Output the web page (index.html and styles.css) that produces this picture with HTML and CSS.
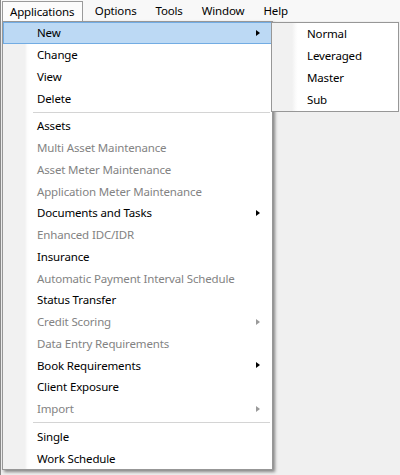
FILE: index.html
```html
<!DOCTYPE html>
<html>
<head>
<meta charset="utf-8">
<link rel="stylesheet" href="styles.css">
</head>
<body>
<div class="screen">
  <div class="menubar">
    <div class="top-item active">Applications</div>
    <div class="top-item">Options</div>
    <div class="top-item">Tools</div>
    <div class="top-item">Window</div>
    <div class="top-item">Help</div>
  </div>
  <div class="dropdown">
    <div class="item hover"><span>New</span><i class="arrow"></i></div>
    <div class="item"><span>Change</span></div>
    <div class="item"><span>View</span></div>
    <div class="item"><span>Delete</span></div>
    <div class="sep"></div>
    <div class="item"><span>Assets</span></div>
    <div class="item off"><span>Multi Asset Maintenance</span></div>
    <div class="item off"><span>Asset Meter Maintenance</span></div>
    <div class="item off"><span>Application Meter Maintenance</span></div>
    <div class="item"><span>Documents and Tasks</span><i class="arrow"></i></div>
    <div class="item off"><span>Enhanced IDC/IDR</span></div>
    <div class="item"><span>Insurance</span></div>
    <div class="item off"><span>Automatic Payment Interval Schedule</span></div>
    <div class="item"><span>Status Transfer</span></div>
    <div class="item off"><span>Credit Scoring</span><i class="arrow"></i></div>
    <div class="item off"><span>Data Entry Requirements</span></div>
    <div class="item"><span>Book Requirements</span><i class="arrow"></i></div>
    <div class="item"><span>Client Exposure</span></div>
    <div class="item off"><span>Import</span><i class="arrow"></i></div>
    <div class="sep"></div>
    <div class="item"><span>Single</span></div>
    <div class="item"><span>Work Schedule</span></div>
  </div>
  <div class="submenu">
    <div class="sub-item">Normal</div>
    <div class="sub-item">Leveraged</div>
    <div class="sub-item">Master</div>
    <div class="sub-item">Sub</div>
  </div>
</div>
</body>
</html>
```
FILE: styles.css
```css
html, body {
  margin: 0;
  padding: 0;
}
body {
  width: 400px;
  height: 475px;
  overflow: hidden;
  background: #f0f0f0;
  font-family: "Noto Sans", "Open Sans", sans-serif;
  font-size: 11.5px;
  letter-spacing: -0.15px;
  color: #000;
}
.screen {
  position: relative;
  width: 400px;
  height: 475px;
  background: #f0f0f0;
  border-left: 1px solid #8a8a8a;
  box-sizing: border-box;
}
.menubar {
  display: flex;
  height: 21px;
  padding-left: 1px;
  background: #f8f8f8;
  box-sizing: border-box;
}
.top-item {
  height: 21px;
  line-height: 21px;
  padding: 0 9.5px 0 9.5px;
  box-sizing: border-box;
}
.top-item.active {
  background: #fcfcfc;
  border: 1px solid #9a9a9a;
  border-bottom: none;
  line-height: 19px;
  padding: 0 8px 0 7px;
  margin-top: 1px;
  height: 20px;
  position: relative;
  z-index: 3;
  margin-right: 2px;
}
.dropdown {
  position: absolute;
  left: 1px;
  top: 21px;
  width: 271px;
  height: 449px;
  box-sizing: border-box;
  border: 1px solid #979797;
  background: linear-gradient(to right, #f1f1f1 0, #f1f1f1 22px, #fcfcfc 24px, #fff 26px);
  box-shadow: 2px 2px 3px rgba(0, 0, 0, 0.45);
  z-index: 2;
}
.item {
  height: 21.75px;
  display: flex;
  align-items: center;
  padding-left: 34px;
  padding-right: 12px;
  box-sizing: border-box;
  position: relative;
}
.item span {
  flex: 1;
  white-space: nowrap;
}
.item.off {
  color: #838383;
}
.item.hover {
  background: #bcd9f4;
  border: 1px solid #72ace3;
  padding-left: 33px;
  padding-right: 11px;
}
.arrow {
  width: 0;
  height: 0;
  border-top: 3.5px solid transparent;
  border-bottom: 3.5px solid transparent;
  border-left: 4px solid #000;
}
.item.off .arrow {
  border-left-color: #9a9a9a;
}
.sep {
  height: 6px;
  display: flex;
  align-items: center;
  padding-left: 30px;
  padding-right: 2px;
}
.sep::before {
  content: "";
  flex: 1;
  height: 1px;
  background: #d4d4d4;
}
.submenu {
  position: absolute;
  left: 270px;
  top: 22px;
  width: 128px;
  height: 90px;
  box-sizing: border-box;
  border: 1px solid #979797;
  background: linear-gradient(to right, #f1f1f1 0, #f1f1f1 20px, #fcfcfc 24px, #fff 26px);
  z-index: 4;
}
.sub-item {
  height: 22px;
  line-height: 22px;
  padding-left: 35px;
  white-space: nowrap;
}
```
